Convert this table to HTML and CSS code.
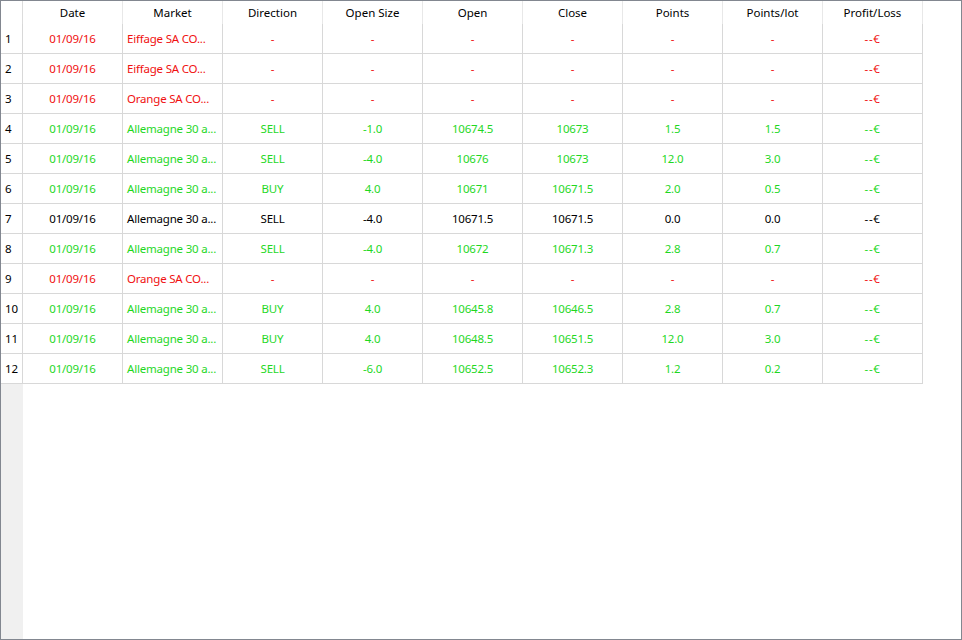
FILE: index.html
```html
<!DOCTYPE html>
<html>
<head>
<meta charset="utf-8">
<link rel="stylesheet" href="styles.css">
</head>
<body>
<div class="window">
  <div class="grid">
    <div class="hd corner"></div>
    <div class="hd">Date</div>
    <div class="hd">Market</div>
    <div class="hd">Direction</div>
    <div class="hd">Open Size</div>
    <div class="hd">Open</div>
    <div class="hd">Close</div>
    <div class="hd">Points</div>
    <div class="hd">Points/lot</div>
    <div class="hd">Profit/Loss</div>

    <div class="rn">1</div><div class="c red">01/09/16</div><div class="c mk red">Eiffage SA CO...</div><div class="c red">-</div><div class="c red">-</div><div class="c red">-</div><div class="c red">-</div><div class="c red">-</div><div class="c red">-</div><div class="c pl red">--€</div>
    <div class="rn">2</div><div class="c red">01/09/16</div><div class="c mk red">Eiffage SA CO...</div><div class="c red">-</div><div class="c red">-</div><div class="c red">-</div><div class="c red">-</div><div class="c red">-</div><div class="c red">-</div><div class="c pl red">--€</div>
    <div class="rn">3</div><div class="c red">01/09/16</div><div class="c mk red">Orange SA CO...</div><div class="c red">-</div><div class="c red">-</div><div class="c red">-</div><div class="c red">-</div><div class="c red">-</div><div class="c red">-</div><div class="c pl red">--€</div>
    <div class="rn">4</div><div class="c grn">01/09/16</div><div class="c mk grn">Allemagne 30 a...</div><div class="c grn">SELL</div><div class="c grn">-1.0</div><div class="c grn">10674.5</div><div class="c grn">10673</div><div class="c grn">1.5</div><div class="c grn">1.5</div><div class="c pl grn">--€</div>
    <div class="rn">5</div><div class="c grn">01/09/16</div><div class="c mk grn">Allemagne 30 a...</div><div class="c grn">SELL</div><div class="c grn">-4.0</div><div class="c grn">10676</div><div class="c grn">10673</div><div class="c grn">12.0</div><div class="c grn">3.0</div><div class="c pl grn">--€</div>
    <div class="rn">6</div><div class="c grn">01/09/16</div><div class="c mk grn">Allemagne 30 a...</div><div class="c grn">BUY</div><div class="c grn">4.0</div><div class="c grn">10671</div><div class="c grn">10671.5</div><div class="c grn">2.0</div><div class="c grn">0.5</div><div class="c pl grn">--€</div>
    <div class="rn">7</div><div class="c blk">01/09/16</div><div class="c mk blk">Allemagne 30 a...</div><div class="c blk">SELL</div><div class="c blk">-4.0</div><div class="c blk">10671.5</div><div class="c blk">10671.5</div><div class="c blk">0.0</div><div class="c blk">0.0</div><div class="c pl blk">--€</div>
    <div class="rn">8</div><div class="c grn">01/09/16</div><div class="c mk grn">Allemagne 30 a...</div><div class="c grn">SELL</div><div class="c grn">-4.0</div><div class="c grn">10672</div><div class="c grn">10671.3</div><div class="c grn">2.8</div><div class="c grn">0.7</div><div class="c pl grn">--€</div>
    <div class="rn">9</div><div class="c red">01/09/16</div><div class="c mk red">Orange SA CO...</div><div class="c red">-</div><div class="c red">-</div><div class="c red">-</div><div class="c red">-</div><div class="c red">-</div><div class="c red">-</div><div class="c pl red">--€</div>
    <div class="rn">10</div><div class="c grn">01/09/16</div><div class="c mk grn">Allemagne 30 a...</div><div class="c grn">BUY</div><div class="c grn">4.0</div><div class="c grn">10645.8</div><div class="c grn">10646.5</div><div class="c grn">2.8</div><div class="c grn">0.7</div><div class="c pl grn">--€</div>
    <div class="rn">11</div><div class="c grn">01/09/16</div><div class="c mk grn">Allemagne 30 a...</div><div class="c grn">BUY</div><div class="c grn">4.0</div><div class="c grn">10648.5</div><div class="c grn">10651.5</div><div class="c grn">12.0</div><div class="c grn">3.0</div><div class="c pl grn">--€</div>
    <div class="rn">12</div><div class="c grn">01/09/16</div><div class="c mk grn">Allemagne 30 a...</div><div class="c grn">SELL</div><div class="c grn">-6.0</div><div class="c grn">10652.5</div><div class="c grn">10652.3</div><div class="c grn">1.2</div><div class="c grn">0.2</div><div class="c pl grn">--€</div>
  </div>
  <div class="filler">
    <div class="gutter"></div>
  </div>
</div>
</body>
</html>
```

FILE: styles.css
```css
* { box-sizing: border-box; }
html, body { margin: 0; padding: 0; background: #ffffff; }
body {
  font-family: "Noto Sans", "Open Sans", sans-serif;
  font-size: 11.5px;
  color: #000;
}
.window {
  width: 962px;
  height: 640px;
  border: 1px solid #828790;
  display: flex;
  flex-direction: column;
  background: #fff;
  overflow: hidden;
}
.grid {
  display: grid;
  grid-template-columns: 22px repeat(9, 100px);
  grid-template-rows: 23px repeat(12, 30px);
  flex: none;
}
.hd {
  display: flex;
  align-items: flex-start;
  justify-content: center;
  padding-top: 4px;
  border-right: 1px solid #e8e8e8;
  white-space: nowrap;
}
.hd.corner { border-right: 1px solid #dcdcdc; }
.rn {
  display: flex;
  align-items: center;
  padding-left: 4px;
  border-right: 1px solid #d8d8d8;
  border-bottom: 1px solid #d8d8d8;
  background: #fff;
}
.c {
  display: flex;
  align-items: center;
  justify-content: center;
  border-right: 1px solid #d8d8d8;
  border-bottom: 1px solid #d8d8d8;
  white-space: nowrap;
  overflow: hidden;
  letter-spacing: -0.2px;
}
.c.pl { letter-spacing: 0.6px; }
.c.mk { justify-content: flex-start; padding-left: 4px; }
.red { color: #f01010; }
.grn { color: #1fd81f; }
.blk { color: #000; }
.filler {
  flex: 1;
  display: flex;
}
.gutter {
  width: 22px;
  background: #f0f0f0;
}
```
